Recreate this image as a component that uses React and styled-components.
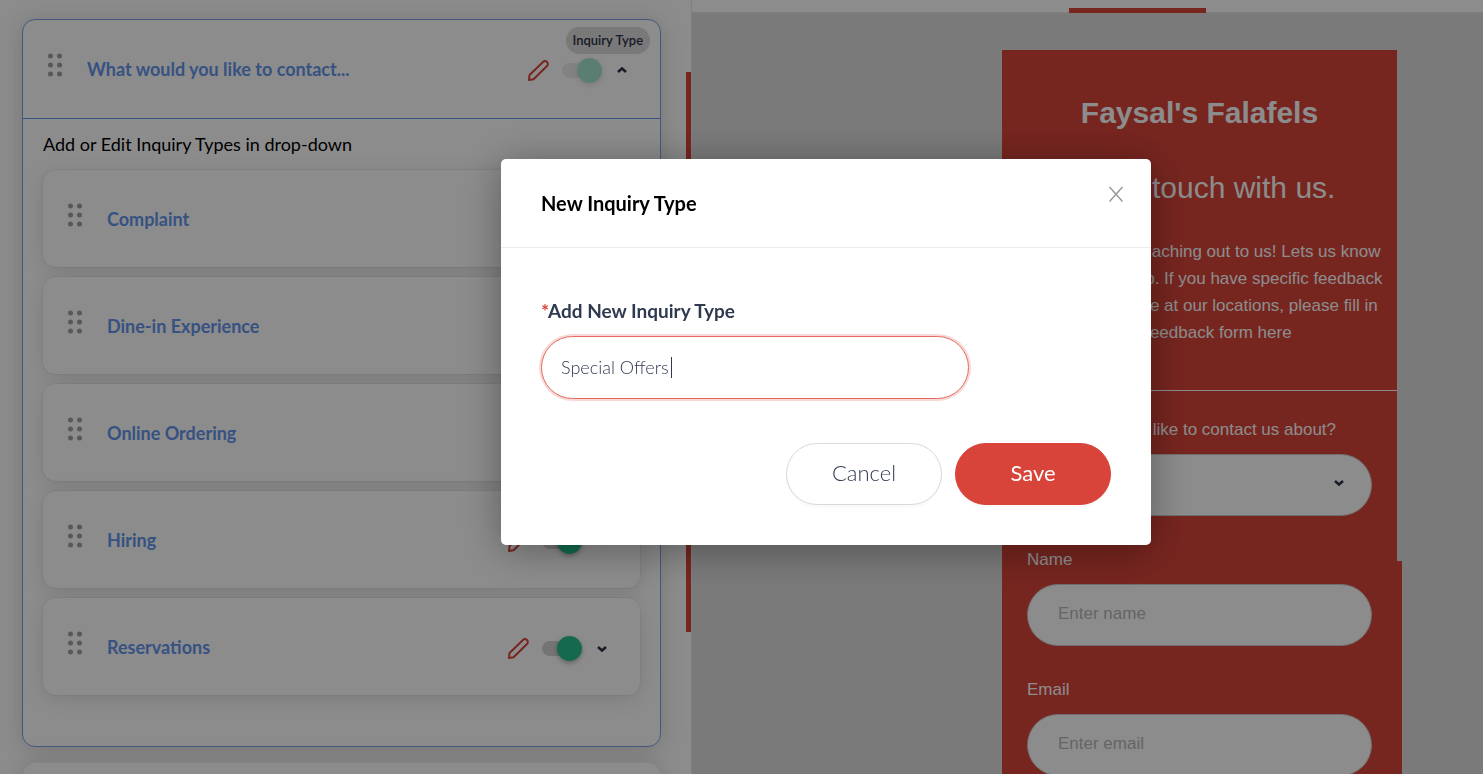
import React from 'react';
import styled, { createGlobalStyle } from 'styled-components';

const GlobalStyle = createGlobalStyle`
  * {
    box-sizing: border-box;
  }
  html, body, #root {
    height: 100%;
    margin: 0;
  }
  body {
    overflow: hidden;
    background: #fff;
    color: #000;
    font-family: Lato, 'Liberation Sans', sans-serif;
  }
  h1, h2, p {
    margin: 0;
  }
  input, select, button {
    font-family: inherit;
  }
`;

const Page = styled.div`
  display: grid;
  grid-template-columns: 7fr 8fr;
  height: 100vh;
  overflow: hidden;
`;

const EditorPane = styled.section`
  display: grid;
  grid-template-columns: 1fr 5px;
  border-right: 1px solid #e8e8e8;
  overflow: hidden;
`;
const EditorContent = styled.div`
  display: flex;
  flex-direction: column;
  gap: 15px;
  padding: 19px 25px 0 22px;
  height: 100vh;
  overflow: hidden;
`;
const ScrollThumb = styled.div`
  height: 560px;
  margin-top: 72px;
  background: #d84439;
`;

const FieldCard = styled.article`
  flex: none;
  min-height: 98px;
  border: 1px solid ${({ $active }) => ($active ? '#7ba1ec' : '#f0f0f0')};
  border-radius: 13px;
  background: #fff;
  box-shadow: 0 2px 24px rgba(0, 0, 0, 0.16);
`;
const FieldHeader = styled.header`
  position: relative;
  padding-bottom: 1px;
  border-bottom: 1px solid #6495ed;
`;
const TypeBadge = styled.span`
  position: absolute;
  top: 7px;
  right: 10px;
  padding: 0 7px;
  border-radius: 14px;
  background: #dcdcdc;
  color: #2a3347;
  font-size: 13px;
  font-weight: 600;
  line-height: 27px;
`;
const FieldBody = styled.div`
  padding: 11px 20px 51px;
`;
const BodyText = styled.p`
  margin-bottom: 12px;
  font-size: 18px;
  line-height: 28px;
`;
const InquiryList = styled.div`
  display: flex;
  flex-direction: column;
  gap: 10px;
`;
const InquiryCard = styled.div`
  border-radius: 13px;
  background: #fff;
  box-shadow: 0 0 0 1px rgba(0, 0, 0, 0.04), 0 4px 20px rgba(0, 0, 0, 0.12);
`;

const Row = styled.div`
  display: flex;
  align-items: center;
  height: 97px;
  padding: 4px 33px 0 25px;
`;
const Handle = styled.svg`
  flex: none;
  width: 15px;
  height: 24px;
  margin: 0 24px 12px 0;
  fill: #a0a0a0;
`;
const RowTitle = styled.span`
  flex: 1;
  margin-bottom: 4px;
  color: #6495ed;
  font-size: 18px;
  font-weight: 700;
  line-height: 24px;
`;
const IconButton = styled.button`
  display: flex;
  padding: 0;
  border: 0;
  background: none;
  color: ${({ $color }) => $color || '#2a3347'};
  cursor: pointer;
`;
const Toggle = styled.input`
  appearance: none;
  position: relative;
  width: 40px;
  height: 25px;
  margin: 0 15px 0 13px;
  opacity: ${({ disabled }) => (disabled ? 0.4 : 1)};
  &::before {
    content: '';
    position: absolute;
    top: 5px;
    left: 0;
    width: 36px;
    height: 15px;
    border-radius: 8px;
    background: #d4d4d4;
  }
  &::after {
    content: '';
    position: absolute;
    top: 0;
    right: 0;
    width: 25px;
    height: 25px;
    border-radius: 50%;
    background: #26c08f;
    box-shadow: 0 2px 5px rgba(0, 0, 0, 0.3);
  }
`;

const PreviewPane = styled.section`
  display: flex;
  flex-direction: column;
  background: #dedede;
  overflow: hidden;
`;
const TabBar = styled.nav`
  display: flex;
  justify-content: center;
  align-items: flex-end;
  flex: none;
  height: 13px;
  padding-left: 100px;
  border-bottom: 1px solid #e8e8e8;
  background: #fff;
`;
const ActiveTab = styled.div`
  width: 137px;
  height: 5px;
  margin-bottom: -1px;
  background: #d84439;
`;
const Device = styled.div`
  display: grid;
  grid-template-columns: 1fr 5px;
  align-self: flex-end;
  width: 400px;
  margin: 37px 81px 0 0;
  background: #d84439;
  font-family: 'Liberation Sans', Arial, sans-serif;
`;
const DeviceScroll = styled.div`
  height: 511px;
  background: #dedede;
`;
const FormIntro = styled.div`
  padding: 39px 10px 44px 26px;
  border-bottom: 1px solid #fff;
  color: #fff;
`;
const Brand = styled.h1`
  margin: 0 16px 27px 0;
  font-size: 30px;
  line-height: 48px;
  text-align: center;
`;
const Tagline = styled.h2`
  margin: 0 16px 26px 0;
  font-size: 30px;
  font-weight: 400;
  line-height: 48px;
  text-align: center;
`;
const Message = styled.p`
  font-size: 17px;
  line-height: 27px;
  white-space: nowrap;
`;
const Form = styled.form`
  display: flex;
  flex-direction: column;
  gap: 31px;
  padding: 26px 25px 0;
`;
const FormField = styled.label`
  display: flex;
  flex-direction: column;
  gap: 11px;
  color: #fff;
  font-size: 17px;
  line-height: 26px;
`;
const TextBox = styled.input`
  width: 100%;
  height: 62px;
  padding: 0 30px 2px;
  border: 1px solid #ccc;
  border-radius: 31px;
  background: #fff;
  font-size: 17px;
  &::placeholder {
    color: #b8b8b8;
  }
`;
const SelectWrap = styled.span`
  display: grid;
  align-items: center;
  color: #2a3347;
  & > * {
    grid-area: 1 / 1;
  }
  & > svg {
    justify-self: end;
    margin: 0 28px 4px 0;
    pointer-events: none;
  }
`;
const SelectBox = styled.select`
  appearance: none;
  width: 100%;
  height: 62px;
  padding: 0 30px;
  border: 1px solid #ccc;
  border-radius: 31px;
  background: #fff;
  font-size: 17px;
`;

const Overlay = styled.div`
  position: fixed;
  inset: 0;
  display: flex;
  justify-content: center;
  align-items: flex-start;
  padding: 159px 0 0 169px;
  background: rgba(0, 0, 0, 0.45);
`;
const Modal = styled.div`
  width: 650px;
  border-radius: 5px;
  background: #fff;
  box-shadow: 0 5px 40px rgba(0, 0, 0, 0.35);
`;
const ModalHeader = styled.div`
  display: flex;
  justify-content: space-between;
  align-items: center;
  height: 89px;
  padding: 0 26px 0 40px;
  border-bottom: 1px solid #ececec;
`;
const ModalTitle = styled.h2`
  font-size: 20px;
  font-weight: 700;
  line-height: 30px;
`;
const CloseButton = styled(IconButton)`
  margin-bottom: 18px;
`;
const ModalForm = styled.form`
  padding: 48px 40px 40px;
  color: #2f3a50;
`;
const ModalLabel = styled.label`
  display: block;
  margin-bottom: 10px;
  font-size: 19px;
  font-weight: 700;
  line-height: 30px;
`;
const Required = styled.span`
  color: #d84439;
`;
const ModalInput = styled.input`
  display: block;
  width: 428px;
  height: 63px;
  padding: 0 19px 2px;
  border: 1px solid #e56a5f;
  border-radius: 32px;
  outline: 0;
  background: linear-gradient(#2f3a50, #2f3a50) 129px center / 1px 21px no-repeat #fff;
  caret-color: transparent;
  color: #2f3a50;
  box-shadow: 0 0 0 2px rgba(216, 68, 57, 0.2);
  font-size: 18px;
  font-weight: 300;
`;
const ModalActions = styled.div`
  display: flex;
  justify-content: flex-end;
  gap: 13px;
  margin-top: 44px;
`;
const PillButton = styled.button`
  width: 156px;
  height: 62px;
  padding: 0 0 3px;
  border: 1px solid ${({ $primary }) => ($primary ? '#d84439' : '#d9d9d9')};
  border-radius: 31px;
  background: ${({ $primary }) => ($primary ? '#d84439' : '#fff')};
  color: ${({ $primary }) => ($primary ? '#fff' : '#2f3a50')};
  box-shadow: 0 2px 2px rgba(0, 0, 0, 0.03);
  font-size: 22px;
  font-weight: ${({ $primary }) => ($primary ? 400 : 300)};
  cursor: pointer;
`;

const PencilIcon = () => (
  <svg width="21" height="21" viewBox="0 0 21 21" fill="none" stroke="currentColor" strokeWidth="2" strokeLinejoin="round">
    <path d="M1 20l.5-5L15 2a2.500 2.500 0 0 1 4 4L5.500 19.300z" />
  </svg>
);

const CaretIcon = ({ up }) => (
  <svg width="10" height="10" viewBox="0 0 10 10" fill="none" stroke="currentColor" strokeWidth="2.500">
    <path d={up ? 'M1 6l4-3.500L9 6' : 'M1 3l4 3.500L9 3'} />
  </svg>
);

const CloseIcon = () => (
  <svg width="18" height="18" viewBox="0 0 18 18" fill="none" stroke="currentColor" strokeWidth="1.500">
    <path d="M2.500 2l13 14.500M15.500 2l-13 14.500" />
  </svg>
);

const DragHandle = () => (
  <Handle viewBox="0 0 15 24">
    {[3, 12, 21].map((y) => (
      <React.Fragment key={y}>
        <circle cx="2.500" cy={y} r="2.500" />
        <circle cx="11.500" cy={y} r="2.500" />
      </React.Fragment>
    ))}
  </Handle>
);

const FieldRow = ({ title, open, locked }) => (
  <Row>
    <DragHandle />
    <RowTitle>{title}</RowTitle>
    <IconButton type="button" $color="#d84439" aria-label={`Edit ${title}`}><PencilIcon /></IconButton>
    <Toggle type="checkbox" defaultChecked disabled={locked} aria-label={`Enable ${title}`} />
    <IconButton type="button" aria-label={`Expand ${title}`}><CaretIcon up={open} /></IconButton>
  </Row>
);

const inquiryTypes = ['Complaint', 'Dine-in Experience', 'Online Ordering', 'Hiring', 'Reservations'];

const App = () => (
  <>
    <GlobalStyle />
    <Page>
      <EditorPane>
        <EditorContent>
          <FieldCard $active>
            <FieldHeader>
              <FieldRow title="What would you like to contact..." open locked />
              <TypeBadge>Inquiry Type</TypeBadge>
            </FieldHeader>
            <FieldBody>
              <BodyText>Add or Edit Inquiry Types in drop-down</BodyText>
              <InquiryList>
                {inquiryTypes.map((type) => (
                  <InquiryCard key={type}>
                    <FieldRow title={type} />
                  </InquiryCard>
                ))}
              </InquiryList>
            </FieldBody>
          </FieldCard>
          <FieldCard />
        </EditorContent>
        <ScrollThumb />
      </EditorPane>

      <PreviewPane>
        <TabBar><ActiveTab /></TabBar>
        <Device>
          <div>
            <FormIntro>
              <Brand>Faysal's Falafels</Brand>
              <Tagline>Get in touch with us.</Tagline>
              <Message>
                Thank you for reaching out to us! Lets us know<br />
                how we can help. If you have specific feedback<br />
                for an experience at our locations, please fill in<br />
                our experience feedback form here
              </Message>
            </FormIntro>
            <Form>
              <FormField>
                What would you like to contact us about?
                <SelectWrap>
                  <SelectBox defaultValue=""><option value="" /></SelectBox>
                  <CaretIcon />
                </SelectWrap>
              </FormField>
              <FormField>
                Name
                <TextBox type="text" placeholder="Enter name" />
              </FormField>
              <FormField>
                Email
                <TextBox type="email" placeholder="Enter email" />
              </FormField>
            </Form>
          </div>
          <DeviceScroll />
        </Device>
      </PreviewPane>
    </Page>

    <Overlay>
      <Modal role="dialog" aria-labelledby="modal-title">
        <ModalHeader>
          <ModalTitle id="modal-title">New Inquiry Type</ModalTitle>
          <CloseButton type="button" $color="#999" aria-label="Close"><CloseIcon /></CloseButton>
        </ModalHeader>
        <ModalForm onSubmit={(e) => e.preventDefault()}>
          <ModalLabel htmlFor="inquiry-type"><Required>*</Required>Add New Inquiry Type</ModalLabel>
          <ModalInput id="inquiry-type" type="text" defaultValue="Special Offers" autoFocus />
          <ModalActions>
            <PillButton type="button">Cancel</PillButton>
            <PillButton type="submit" $primary>Save</PillButton>
          </ModalActions>
        </ModalForm>
      </Modal>
    </Overlay>
  </>
);

export default App;
